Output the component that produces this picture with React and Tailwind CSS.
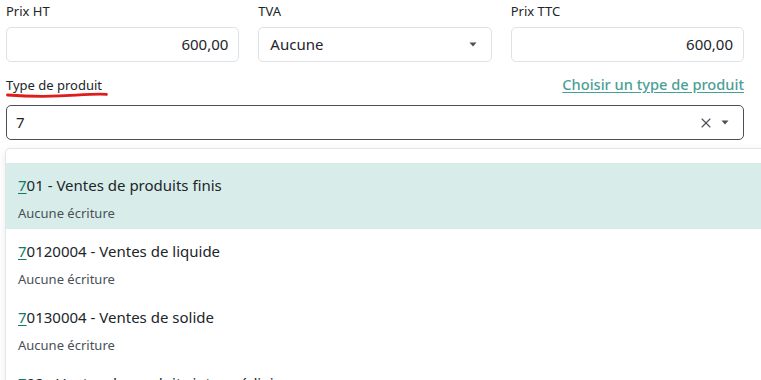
import { X } from 'lucide-react';

const options = [
    { code: '701', label: 'Ventes de produits finis', active: true },
    { code: '70120004', label: 'Ventes de liquide' },
    { code: '70130004', label: 'Ventes de solide' },
    { code: '702', label: 'Ventes de produits intermédiaires' },
];

const Caret = () => (
    <svg width="8" height="5" viewBox="0 0 8 5" className="fill-[#495057]">
        <path d="M0.5 0.5h7L4 4.5z" />
    </svg>
);

const App = () => {
    return (
        <div className="w-[761px] h-[380px] overflow-hidden bg-white text-[#212529] font-['Noto_Sans',sans-serif]">
            <div className="grid grid-cols-3 gap-x-[19px] w-[738px] ml-[6px]">
                {[
                    { label: 'Prix HT', value: '600,00' },
                    { label: 'TVA', value: 'Aucune', select: true },
                    { label: 'Prix TTC', value: '600,00' },
                ].map((f) => (
                    <div key={f.label}>
                        <div className="h-[27px] pt-[1px] text-[13px] leading-[20px]">{f.label}</div>
                        <div className="h-[35px] border border-[#dee2e6] rounded-[5px] flex items-center pl-[11px] pr-[10px] text-[15px]">
                            {f.select ? (
                                <>
                                    <span className="flex-1">{f.value}</span>
                                    <Caret />
                                    <span className="w-[4px]" />
                                </>
                            ) : (
                                <span className="ml-auto">{f.value}</span>
                            )}
                        </div>
                    </div>
                ))}
            </div>

            <div className="flex items-center justify-between w-[738px] ml-[6px] mt-[12px] h-[22px]">
                <div className="relative text-[13px] leading-[20px]">
                    Type de produit
                    <svg className="absolute left-0 top-[16px]" width="102" height="7" viewBox="0 0 102 7">
                        <path d="M1.5 4C25 5.8 55 5.2 70 4.2S95 2.6 100.5 3.4" stroke="#e01b1b" strokeWidth="2.8" fill="none" strokeLinecap="round" />
                    </svg>
                </div>
                <a className="text-[14.6px] text-[#4a9e96] underline underline-offset-2 font-medium">
                    Choisir un type de produit
                </a>
            </div>

            <div className="w-[738px] ml-[6px] mt-[9px] h-[35px] border border-[#495057] rounded-[5px] flex items-center pl-[9px] pr-[14px] text-[15px]">
                <span className="flex-1">7</span>
                <X size={16} strokeWidth={1.6} className="text-[#495057] mr-[7px]" />
                <Caret />
            </div>

            <div className="ml-[5px] mt-[8px] w-[800px] border border-[#e3e5e8] rounded-tl-[5px] bg-white pt-[14px] shadow-[0_2px_8px_rgba(0,0,0,0.08)]">
                {options.map((o) => (
                    <div key={o.code} className={`h-[66px] pl-[12px] pt-[11px] ${o.active ? 'bg-[#d8ede9]' : ''}`}>
                        <div className="text-[15px] leading-[22px]">
                            <span className="underline decoration-[#0f7a70] underline-offset-2 text-[#0f7a70]">7</span>
                            {o.code.slice(1)} - {o.label}
                        </div>
                        <div className="mt-[8px] text-[13px] leading-[18px] text-[#495057]">Aucune écriture</div>
                    </div>
                ))}
            </div>
        </div>
    );
};

export default App;
